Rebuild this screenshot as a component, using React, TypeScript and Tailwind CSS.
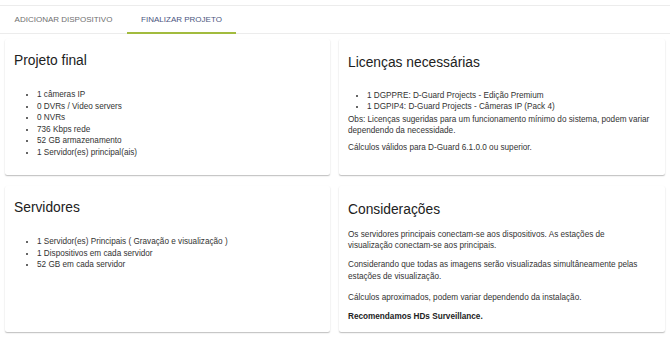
import React from "react";

const font = { fontFamily: '"Liberation Sans", Arial, sans-serif' };

function Card({ children, className = "" }: { children: React.ReactNode; className?: string }) {
  return (
    <div
      className={
        "bg-white rounded-[2px] px-[9px] shadow-[0_1px_1px_-1px_rgba(0,0,0,0.2),0_1px_1px_0_rgba(0,0,0,0.14),0_1px_2px_0_rgba(0,0,0,0.12)] " +
        className
      }
    >
      {children}
    </div>
  );
}

function Title({ children }: { children: React.ReactNode }) {
  return <h2 className="text-[13.8px] leading-[18px] text-[#212121] font-normal">{children}</h2>;
}

export default function App() {
  return (
    <div className="w-[670px] h-[337px] bg-white overflow-hidden text-[#333]" style={font}>
      <div className="h-[5px]" />
      <div className="flex h-[29px] border-t border-b border-[#ececec] text-[8px] leading-none">
        <div className="w-[127px] flex items-center justify-center text-[#6f6f6f]">ADICIONAR DISPOSITIVO</div>
        <div className="w-[109px] relative flex items-center justify-center text-[#4a5580]">
          FINALIZAR PROJETO
          <div className="absolute left-0 right-0 bottom-[-1px] h-[2px] bg-[#a2bb3e]" />
        </div>
      </div>
      <div className="grid grid-cols-[325px_326px] gap-x-[9px] gap-y-[11px] px-[5px] pt-[5px]">
        <Card className="pt-[13px] pb-[17px]">
          <Title>Projeto final</Title>
          <ul className="list-disc mt-[19px] pl-[23px] text-[8.2px] leading-[11.5px]">
            <li>1 câmeras IP</li>
            <li>0 DVRs / Video servers</li>
            <li>0 NVRs</li>
            <li>736 Kbps rede</li>
            <li>52 GB armazenamento</li>
            <li>1 Servidor(es) principal(ais)</li>
          </ul>
        </Card>
        <Card className="pt-[15px] pb-[8px]">
          <Title>Licenças necessárias</Title>
          <ul className="list-disc mt-[19px] pl-[19px] text-[8.2px] leading-[10.7px]">
            <li>1 DGPPRE: D-Guard Projects - Edição Premium</li>
            <li>1 DGPIP4: D-Guard Projects - Câmeras IP (Pack 4)</li>
          </ul>
          <p className="mt-[3px] text-[8.2px] leading-[10.7px]">
            Obs: Licenças sugeridas para um funcionamento mínimo do sistema, podem variar
            <br />
            dependendo da necessidade.
          </p>
          <p className="mt-[6.6px] text-[8.2px] leading-[10.7px]">Cálculos válidos para D-Guard 6.1.0.0 ou superior.</p>
        </Card>
        <Card className="pt-[13px] pb-[10px]">
          <Title>Servidores</Title>
          <ul className="list-disc mt-[19px] pl-[23px] text-[8.2px] leading-[11.5px]">
            <li>1 Servidor(es) Principais ( Gravação e visualização )</li>
            <li>1 Dispositivos em cada servidor</li>
            <li>52 GB em cada servidor</li>
          </ul>
        </Card>
        <Card className="pt-[15px] pb-[10px]">
          <Title>Considerações</Title>
          <p className="mt-[10px] text-[8.2px] leading-[11.4px]">
            Os servidores principais conectam-se aos dispositivos. As estações de
            <br />
            visualização conectam-se aos principais.
          </p>
          <p className="mt-[7.5px] text-[8.2px] leading-[11.4px]">
            Considerando que todas as imagens serão visualizadas simultâneamente pelas
            <br />
            estações de visualização.
          </p>
          <p className="mt-[10px] text-[8.2px] leading-[11.4px]">Cálculos aproximados, podem variar dependendo da instalação.</p>
          <p className="mt-[7.3px] text-[8.2px] leading-[11.4px] font-bold text-[#222]">Recomendamos HDs Surveillance.</p>
        </Card>
      </div>
    </div>
  );
}
